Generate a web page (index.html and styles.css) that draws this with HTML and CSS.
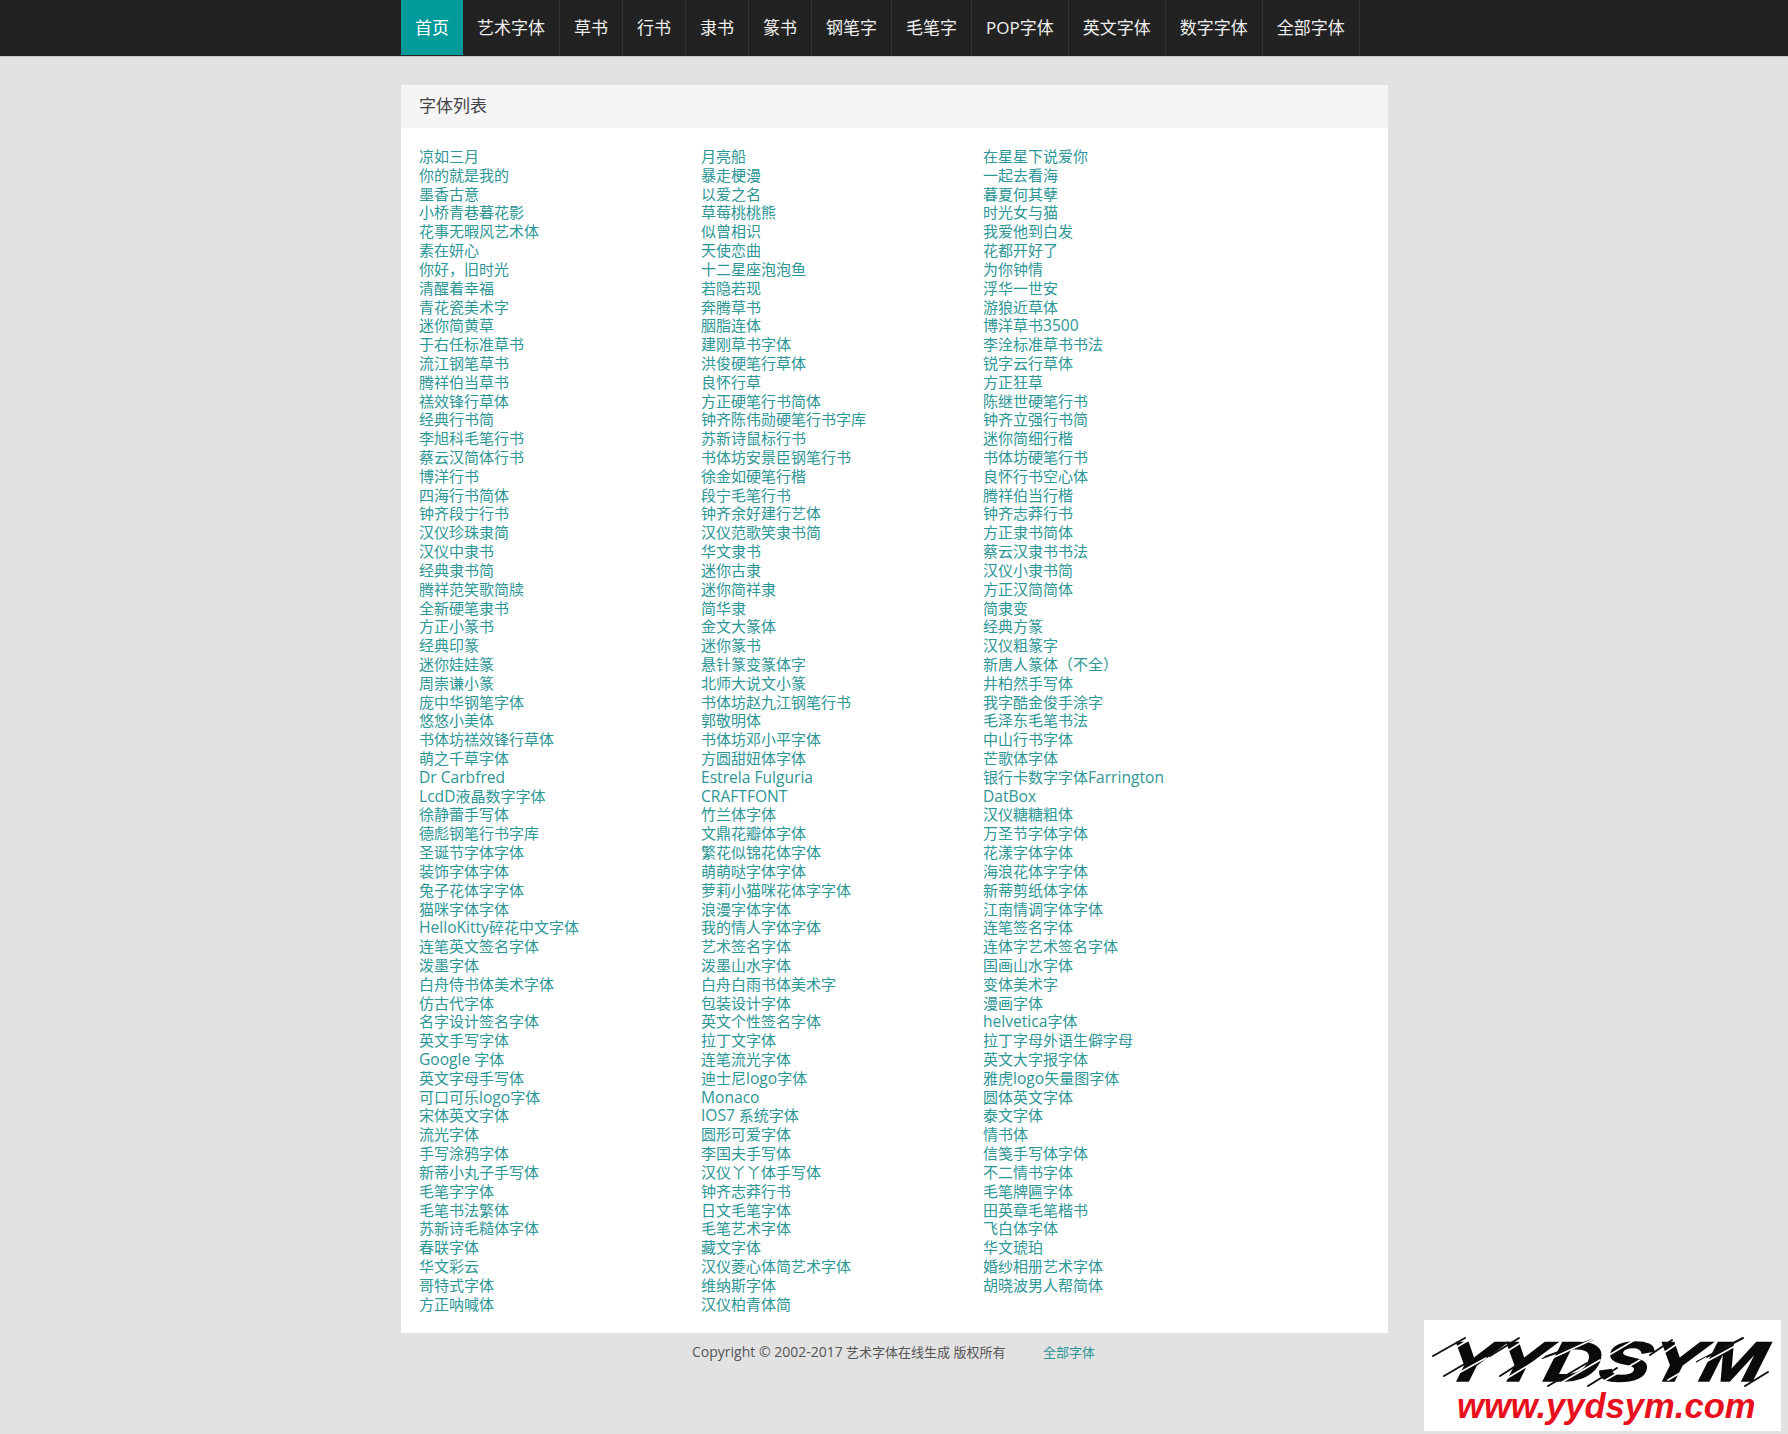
FILE: index.html
```html
<!DOCTYPE html>
<html lang="zh-CN">
<head>
<meta charset="utf-8">
<title>字体列表</title>
<link rel="stylesheet" href="styles.css">
</head>
<body>
<header class="navbar">
  <nav class="nav">
    <a class="nav-item active" href="#">首页</a><a class="nav-item" href="#">艺术字体</a><a class="nav-item" href="#">草书</a><a class="nav-item" href="#">行书</a><a class="nav-item" href="#">隶书</a><a class="nav-item" href="#">篆书</a><a class="nav-item" href="#">钢笔字</a><a class="nav-item" href="#">毛笔字</a><a class="nav-item" href="#">POP字体</a><a class="nav-item" href="#">英文字体</a><a class="nav-item" href="#">数字字体</a><a class="nav-item" href="#">全部字体</a>
  </nav>
</header>
<main class="panel">
  <h2 class="panel-heading">字体列表</h2>
  <div class="font-grid">
    <ul class="font-col">
      <li><a href="#">凉如三月</a></li><li><a href="#">你的就是我的</a></li><li><a href="#">墨香古意</a></li><li><a href="#">小桥青巷暮花影</a></li><li><a href="#">花事无暇风艺术体</a></li><li><a href="#">素在妍心</a></li><li><a href="#">你好，旧时光</a></li><li><a href="#">清醒着幸福</a></li><li><a href="#">青花瓷美术字</a></li><li><a href="#">迷你简黄草</a></li><li><a href="#">于右任标准草书</a></li><li><a href="#">流江钢笔草书</a></li><li><a href="#">腾祥伯当草书</a></li><li><a href="#">禚效锋行草体</a></li><li><a href="#">经典行书简</a></li><li><a href="#">李旭科毛笔行书</a></li><li><a href="#">蔡云汉简体行书</a></li><li><a href="#">博洋行书</a></li><li><a href="#">四海行书简体</a></li><li><a href="#">钟齐段宁行书</a></li><li><a href="#">汉仪珍珠隶简</a></li><li><a href="#">汉仪中隶书</a></li><li><a href="#">经典隶书简</a></li><li><a href="#">腾祥范笑歌简牍</a></li><li><a href="#">全新硬笔隶书</a></li><li><a href="#">方正小篆书</a></li><li><a href="#">经典印篆</a></li><li><a href="#">迷你娃娃篆</a></li><li><a href="#">周崇谦小篆</a></li><li><a href="#">庞中华钢笔字体</a></li><li><a href="#">悠悠小美体</a></li><li><a href="#">书体坊禚效锋行草体</a></li><li><a href="#">萌之千草字体</a></li><li><a href="#"><span class="lat">Dr Carbfred</span></a></li><li><a href="#"><span class="lat">LcdD</span>液晶数字字体</a></li><li><a href="#">徐静蕾手写体</a></li><li><a href="#">德彪钢笔行书字库</a></li><li><a href="#">圣诞节字体字体</a></li><li><a href="#">装饰字体字体</a></li><li><a href="#">兔子花体字字体</a></li><li><a href="#">猫咪字体字体</a></li><li><a href="#"><span class="lat">HelloKitty</span>碎花中文字体</a></li><li><a href="#">连笔英文签名字体</a></li><li><a href="#">泼墨字体</a></li><li><a href="#">白舟侍书体美术字体</a></li><li><a href="#">仿古代字体</a></li><li><a href="#">名字设计签名字体</a></li><li><a href="#">英文手写字体</a></li><li><a href="#"><span class="lat">Google</span> 字体</a></li><li><a href="#">英文字母手写体</a></li><li><a href="#">可口可乐<span class="lat">logo</span>字体</a></li><li><a href="#">宋体英文字体</a></li><li><a href="#">流光字体</a></li><li><a href="#">手写涂鸦字体</a></li><li><a href="#">新蒂小丸子手写体</a></li><li><a href="#">毛笔字字体</a></li><li><a href="#">毛笔书法繁体</a></li><li><a href="#">苏新诗毛糙体字体</a></li><li><a href="#">春联字体</a></li><li><a href="#">华文彩云</a></li><li><a href="#">哥特式字体</a></li><li><a href="#">方正呐喊体</a></li>
    </ul>
    <ul class="font-col">
      <li><a href="#">月亮船</a></li><li><a href="#">暴走梗漫</a></li><li><a href="#">以爱之名</a></li><li><a href="#">草莓桃桃熊</a></li><li><a href="#">似曾相识</a></li><li><a href="#">天使恋曲</a></li><li><a href="#">十二星座泡泡鱼</a></li><li><a href="#">若隐若现</a></li><li><a href="#">奔腾草书</a></li><li><a href="#">胭脂连体</a></li><li><a href="#">建刚草书字体</a></li><li><a href="#">洪俊硬笔行草体</a></li><li><a href="#">良怀行草</a></li><li><a href="#">方正硬笔行书简体</a></li><li><a href="#">钟齐陈伟勋硬笔行书字库</a></li><li><a href="#">苏新诗鼠标行书</a></li><li><a href="#">书体坊安景臣钢笔行书</a></li><li><a href="#">徐金如硬笔行楷</a></li><li><a href="#">段宁毛笔行书</a></li><li><a href="#">钟齐余好建行艺体</a></li><li><a href="#">汉仪范歌笑隶书简</a></li><li><a href="#">华文隶书</a></li><li><a href="#">迷你古隶</a></li><li><a href="#">迷你简祥隶</a></li><li><a href="#">简华隶</a></li><li><a href="#">金文大篆体</a></li><li><a href="#">迷你篆书</a></li><li><a href="#">悬针篆变篆体字</a></li><li><a href="#">北师大说文小篆</a></li><li><a href="#">书体坊赵九江钢笔行书</a></li><li><a href="#">郭敬明体</a></li><li><a href="#">书体坊邓小平字体</a></li><li><a href="#">方圆甜妞体字体</a></li><li><a href="#"><span class="lat">Estrela Fulguria</span></a></li><li><a href="#"><span class="lat">CRAFTFONT</span></a></li><li><a href="#">竹兰体字体</a></li><li><a href="#">文鼎花瓣体字体</a></li><li><a href="#">繁花似锦花体字体</a></li><li><a href="#">萌萌哒字体字体</a></li><li><a href="#">萝莉小猫咪花体字字体</a></li><li><a href="#">浪漫字体字体</a></li><li><a href="#">我的情人字体字体</a></li><li><a href="#">艺术签名字体</a></li><li><a href="#">泼墨山水字体</a></li><li><a href="#">白舟白雨书体美术字</a></li><li><a href="#">包装设计字体</a></li><li><a href="#">英文个性签名字体</a></li><li><a href="#">拉丁文字体</a></li><li><a href="#">连笔流光字体</a></li><li><a href="#">迪士尼<span class="lat">logo</span>字体</a></li><li><a href="#"><span class="lat">Monaco</span></a></li><li><a href="#"><span class="lat">IOS7</span> 系统字体</a></li><li><a href="#">圆形可爱字体</a></li><li><a href="#">李国夫手写体</a></li><li><a href="#">汉仪丫丫体手写体</a></li><li><a href="#">钟齐志莽行书</a></li><li><a href="#">日文毛笔字体</a></li><li><a href="#">毛笔艺术字体</a></li><li><a href="#">藏文字体</a></li><li><a href="#">汉仪菱心体简艺术字体</a></li><li><a href="#">维纳斯字体</a></li><li><a href="#">汉仪柏青体简</a></li>
    </ul>
    <ul class="font-col">
      <li><a href="#">在星星下说爱你</a></li><li><a href="#">一起去看海</a></li><li><a href="#">暮夏何其孽</a></li><li><a href="#">时光女与猫</a></li><li><a href="#">我爱他到白发</a></li><li><a href="#">花都开好了</a></li><li><a href="#">为你钟情</a></li><li><a href="#">浮华一世安</a></li><li><a href="#">游狼近草体</a></li><li><a href="#">博洋草书<span class="lat">3500</span></a></li><li><a href="#">李洤标准草书书法</a></li><li><a href="#">锐字云行草体</a></li><li><a href="#">方正狂草</a></li><li><a href="#">陈继世硬笔行书</a></li><li><a href="#">钟齐立强行书简</a></li><li><a href="#">迷你简细行楷</a></li><li><a href="#">书体坊硬笔行书</a></li><li><a href="#">良怀行书空心体</a></li><li><a href="#">腾祥伯当行楷</a></li><li><a href="#">钟齐志莽行书</a></li><li><a href="#">方正隶书简体</a></li><li><a href="#">蔡云汉隶书书法</a></li><li><a href="#">汉仪小隶书简</a></li><li><a href="#">方正汉简简体</a></li><li><a href="#">简隶变</a></li><li><a href="#">经典方篆</a></li><li><a href="#">汉仪粗篆字</a></li><li><a href="#">新唐人篆体（不全）</a></li><li><a href="#">井柏然手写体</a></li><li><a href="#">我字酷金俊手涂字</a></li><li><a href="#">毛泽东毛笔书法</a></li><li><a href="#">中山行书字体</a></li><li><a href="#">芒歌体字体</a></li><li><a href="#">银行卡数字字体<span class="lat">Farrington</span></a></li><li><a href="#"><span class="lat">DatBox</span></a></li><li><a href="#">汉仪糖糖粗体</a></li><li><a href="#">万圣节字体字体</a></li><li><a href="#">花漾字体字体</a></li><li><a href="#">海浪花体字字体</a></li><li><a href="#">新蒂剪纸体字体</a></li><li><a href="#">江南情调字体字体</a></li><li><a href="#">连笔签名字体</a></li><li><a href="#">连体字艺术签名字体</a></li><li><a href="#">国画山水字体</a></li><li><a href="#">变体美术字</a></li><li><a href="#">漫画字体</a></li><li><a href="#"><span class="lat">helvetica</span>字体</a></li><li><a href="#">拉丁字母外语生僻字母</a></li><li><a href="#">英文大字报字体</a></li><li><a href="#">雅虎<span class="lat">logo</span>矢量图字体</a></li><li><a href="#">圆体英文字体</a></li><li><a href="#">泰文字体</a></li><li><a href="#">情书体</a></li><li><a href="#">信笺手写体字体</a></li><li><a href="#">不二情书字体</a></li><li><a href="#">毛笔牌匾字体</a></li><li><a href="#">田英章毛笔楷书</a></li><li><a href="#">飞白体字体</a></li><li><a href="#">华文琥珀</a></li><li><a href="#">婚纱相册艺术字体</a></li><li><a href="#">胡晓波男人帮简体</a></li>
    </ul>
  </div>
</main>
<footer class="footer">
  <span class="copyright"><span class="copy-lat">Copyright © 2002-2017</span> 艺术字体在线生成 版权所有</span><a class="footer-link" href="#">全部字体</a>
</footer>
<aside class="logo">
  <div class="logo-name">YYDSYM</div>
  <div class="logo-url">www.yydsym.com</div>
  <svg class="logo-slashes" viewBox="0 0 357 111" aria-hidden="true">
    <g class="slash-dark">
      <path d="M9 36 L41 18"/><path d="M66 36 L95 18"/><path d="M118 38 L168 20"/><path d="M226 35 L248 20"/><path d="M273 42 L319 18"/><path d="M76 56 L98 42"/><path d="M124 66 L163 43"/><path d="M164 66 L193 48"/><path d="M321 66 L344 52"/><path d="M20 56 L44 42"/>
    </g>
    <g class="slash-light">
      <path d="M14 38 L50 17"/><path d="M72 38 L106 17"/><path d="M124 40 L172 18"/><path d="M180 38 L214 18"/><path d="M232 38 L262 18"/><path d="M278 44 L326 18"/><path d="M22 60 L62 38"/><path d="M80 60 L120 36"/><path d="M128 68 L176 40"/><path d="M168 68 L216 40"/><path d="M244 60 L282 38"/><path d="M324 68 L350 52"/>
    </g>
  </svg>
</aside>
</body>
</html>
```

FILE: styles.css
```css
* {
  box-sizing: border-box;
}

html,
body {
  margin: 0;
  padding: 0;
}

body {
  position: relative;
  height: 1434px;
  overflow: hidden;
  background: #e2e2e2;
  color: #333;
  font-family: "Open Sans", "Noto Sans CJK SC", sans-serif;
}

a {
  text-decoration: none;
}

.navbar {
  height: 57px;
  background: #222;
  border-bottom: 1px solid #c8c8c8;
}

.nav {
  display: flex;
  width: 987px;
  margin-left: 401px;
  height: 56px;
}

.nav-item {
  display: block;
  height: 56px;
  padding: 0 14px;
  border-right: 1px solid #353535;
  color: #f0f0f0;
  font-size: 17px;
  line-height: 56px;
  white-space: nowrap;
}

.nav-item.active {
  height: 55px;
  background: #009a9a;
  border-right: 0;
  color: #fff;
}

.panel {
  width: 987px;
  margin: 28px 0 0 401px;
  background: #fff;
}

.panel-heading {
  margin: 0;
  height: 43px;
  padding: 0 18px;
  background: #f5f5f5;
  color: #444;
  font-size: 17px;
  font-weight: 400;
  line-height: 41px;
}

.font-grid {
  display: grid;
  grid-template-columns: repeat(3, 282px);
  padding: 19px 18px 20px;
}

.font-col {
  margin: 0;
  padding: 0;
  list-style: none;
}

.font-col li {
  height: 18.82px;
  font-size: 15px;
  line-height: 18.82px;
  white-space: nowrap;
}

.font-col a {
  color: #2d9696;
}

.lat {
  font-size: 15.6px;
}

.footer {
  width: 987px;
  margin-left: 401px;
  padding: 10px 0 0 291px;
  display: flex;
  font-size: 13px;
  line-height: 18px;
}

.copyright {
  width: 351px;
  color: #555;
  white-space: nowrap;
}

.copy-lat {
  font-size: 14px;
}

.footer-link {
  color: #2d9696;
}

.logo {
  position: absolute;
  left: 1424px;
  top: 1320px;
  width: 357px;
  height: 111px;
  background: #fff;
  overflow: hidden;
}

.logo-name {
  height: 66px;
  padding: 9px 0 0 12px;
  color: #0a0a0a;
  font-family: "Liberation Sans", sans-serif;
  font-size: 56px;
  font-style: italic;
  font-weight: 700;
  line-height: 66px;
  transform: scaleX(1.35) skewX(-10deg);
  transform-origin: 0 100%;
  -webkit-text-stroke: 1.5px #0a0a0a;
}

.logo-url {
  padding-left: 33px;
  color: #e8101c;
  font-family: "Liberation Sans", sans-serif;
  font-size: 34.6px;
  font-style: italic;
  font-weight: 700;
  line-height: 40px;
  white-space: nowrap;
}

.logo-slashes {
  position: absolute;
  left: 0;
  top: 0;
  width: 357px;
  height: 111px;
  fill: none;
  stroke-linecap: round;
}

.slash-dark {
  stroke: #111;
  stroke-width: 2;
}

.slash-light {
  stroke: #fff;
  stroke-width: 1.6;
}
```
